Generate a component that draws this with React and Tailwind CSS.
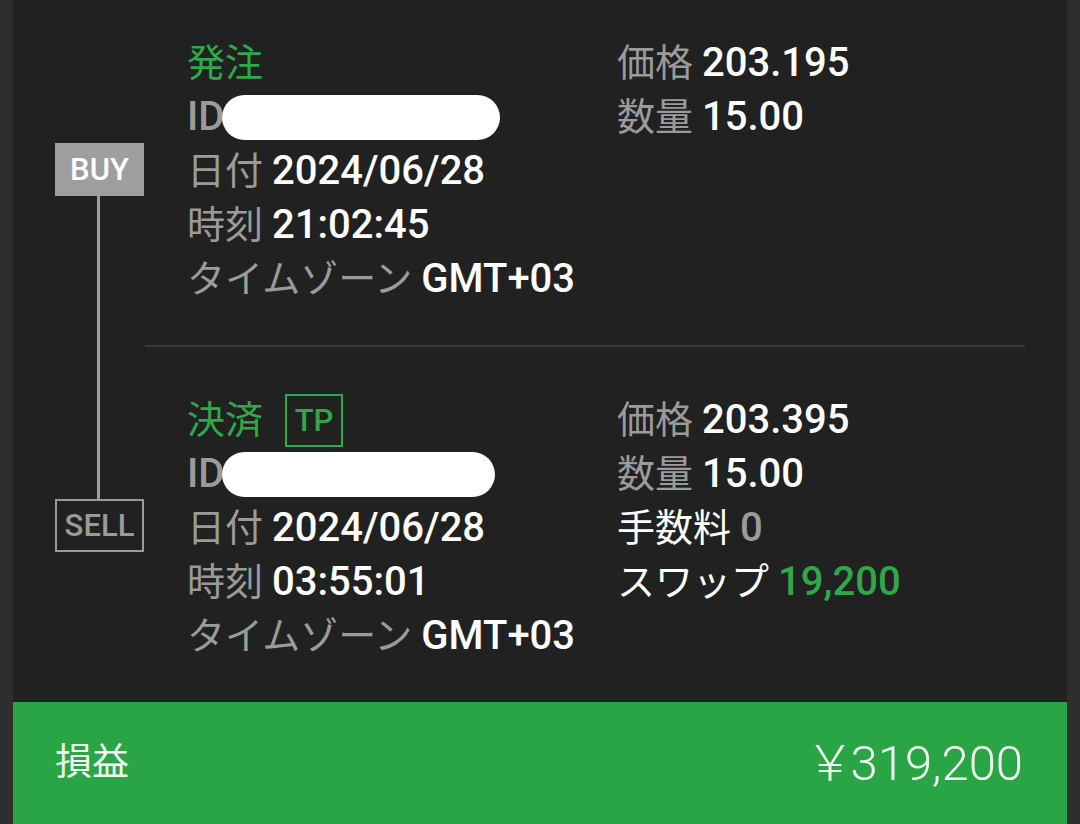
import React from "react";

const FONT = { fontFamily: 'Roboto, "Noto Sans CJK JP", sans-serif' };

function Row({ label, children, labelWhite }) {
  return (
    <div className="h-[54px] flex items-center whitespace-nowrap">
      <span className={labelWhite ? "text-white" : "text-[#9b9b9b]"}>{label}</span>
      <span className="ml-[9px] font-medium text-[40px]">{children}</span>
    </div>
  );
}

function IdRow({ w }) {
  return (
    <div className="h-[54px] flex items-center">
      <span className="text-[#9b9b9b] font-medium text-[40px] -mr-[2px]">ID</span>
      <div className={`${w} h-[45px] bg-white rounded-full`}></div>
    </div>
  );
}

export default function App() {
  return (
    <div
      className="w-[1080px] h-[824px] bg-[#2e2e2e] flex overflow-hidden"
      style={FONT}
    >
      <div className="ml-[13px] w-[1054px] h-full bg-[#212121] flex flex-col">
        <div className="flex-1 flex pl-[42px] pr-[42px] text-[38px] text-white leading-none">
          {/* timeline column */}
          <div className="w-[90px] pt-[143px] flex flex-col items-start">
            <div className="w-[89px] h-[53px] bg-[#9e9e9e] flex items-center justify-center text-white text-[31px] font-medium">
              BUY
            </div>
            <div className="w-[3px] h-[303px] bg-[#9e9e9e] ml-[42px]"></div>
            <div className="w-[89px] h-[53px] border-2 border-[#9a9a9a] flex items-center justify-center text-[#9a9a9a] text-[31px] font-medium">
              SELL
            </div>
          </div>

          {/* sections */}
          <div className="flex-1 flex flex-col">
            <div className="pt-[36px] pb-[39px] pl-[42px] flex">
              <div className="w-[430px] flex flex-col">
                <div className="h-[54px] flex items-center text-[#2fa84a]">発注</div>
                <IdRow w="w-[278px]" />
                <Row label="日付">2024/06/28</Row>
                <Row label="時刻">21:02:45</Row>
                <Row label="タイムゾーン">GMT+03</Row>
              </div>
              <div className="flex flex-col">
                <Row label="価格">203.195</Row>
                <Row label="数量">15.00</Row>
              </div>
            </div>

            <div className="h-[2px] bg-[#3a3a3a]"></div>

            <div className="pt-[46px] pl-[42px] flex">
              <div className="w-[430px] flex flex-col">
                <div className="h-[54px] flex items-center text-[#2fa84a]">
                  <span>決済</span>
                  <span className="ml-[22px] w-[58px] h-[53px] border-2 border-[#2fa84a] flex items-center justify-center text-[31px] font-medium">
                    TP
                  </span>
                </div>
                <IdRow w="w-[273px]" />
                <Row label="日付">2024/06/28</Row>
                <Row label="時刻">03:55:01</Row>
                <Row label="タイムゾーン">GMT+03</Row>
              </div>
              <div className="flex flex-col">
                <Row label="価格">203.395</Row>
                <Row label="数量">15.00</Row>
                <Row label="手数料" labelWhite>
                  <span className="text-[#9b9b9b]">0</span>
                </Row>
                <Row label="スワップ" labelWhite>
                  <span className="text-[#2fa84a]">19,200</span>
                </Row>
              </div>
            </div>
          </div>
        </div>

        {/* P/L bar */}
        <div className="h-[122px] bg-[#2aa546] flex items-center justify-between pl-[42px] pr-[44px] text-[#f2fbf2]">
          <span className="text-[37px]">損益</span>
          <span className="text-[49px] font-light leading-none whitespace-nowrap">
            <span className="-mr-[4px]">￥</span>319,200
          </span>
        </div>
      </div>
    </div>
  );
}
